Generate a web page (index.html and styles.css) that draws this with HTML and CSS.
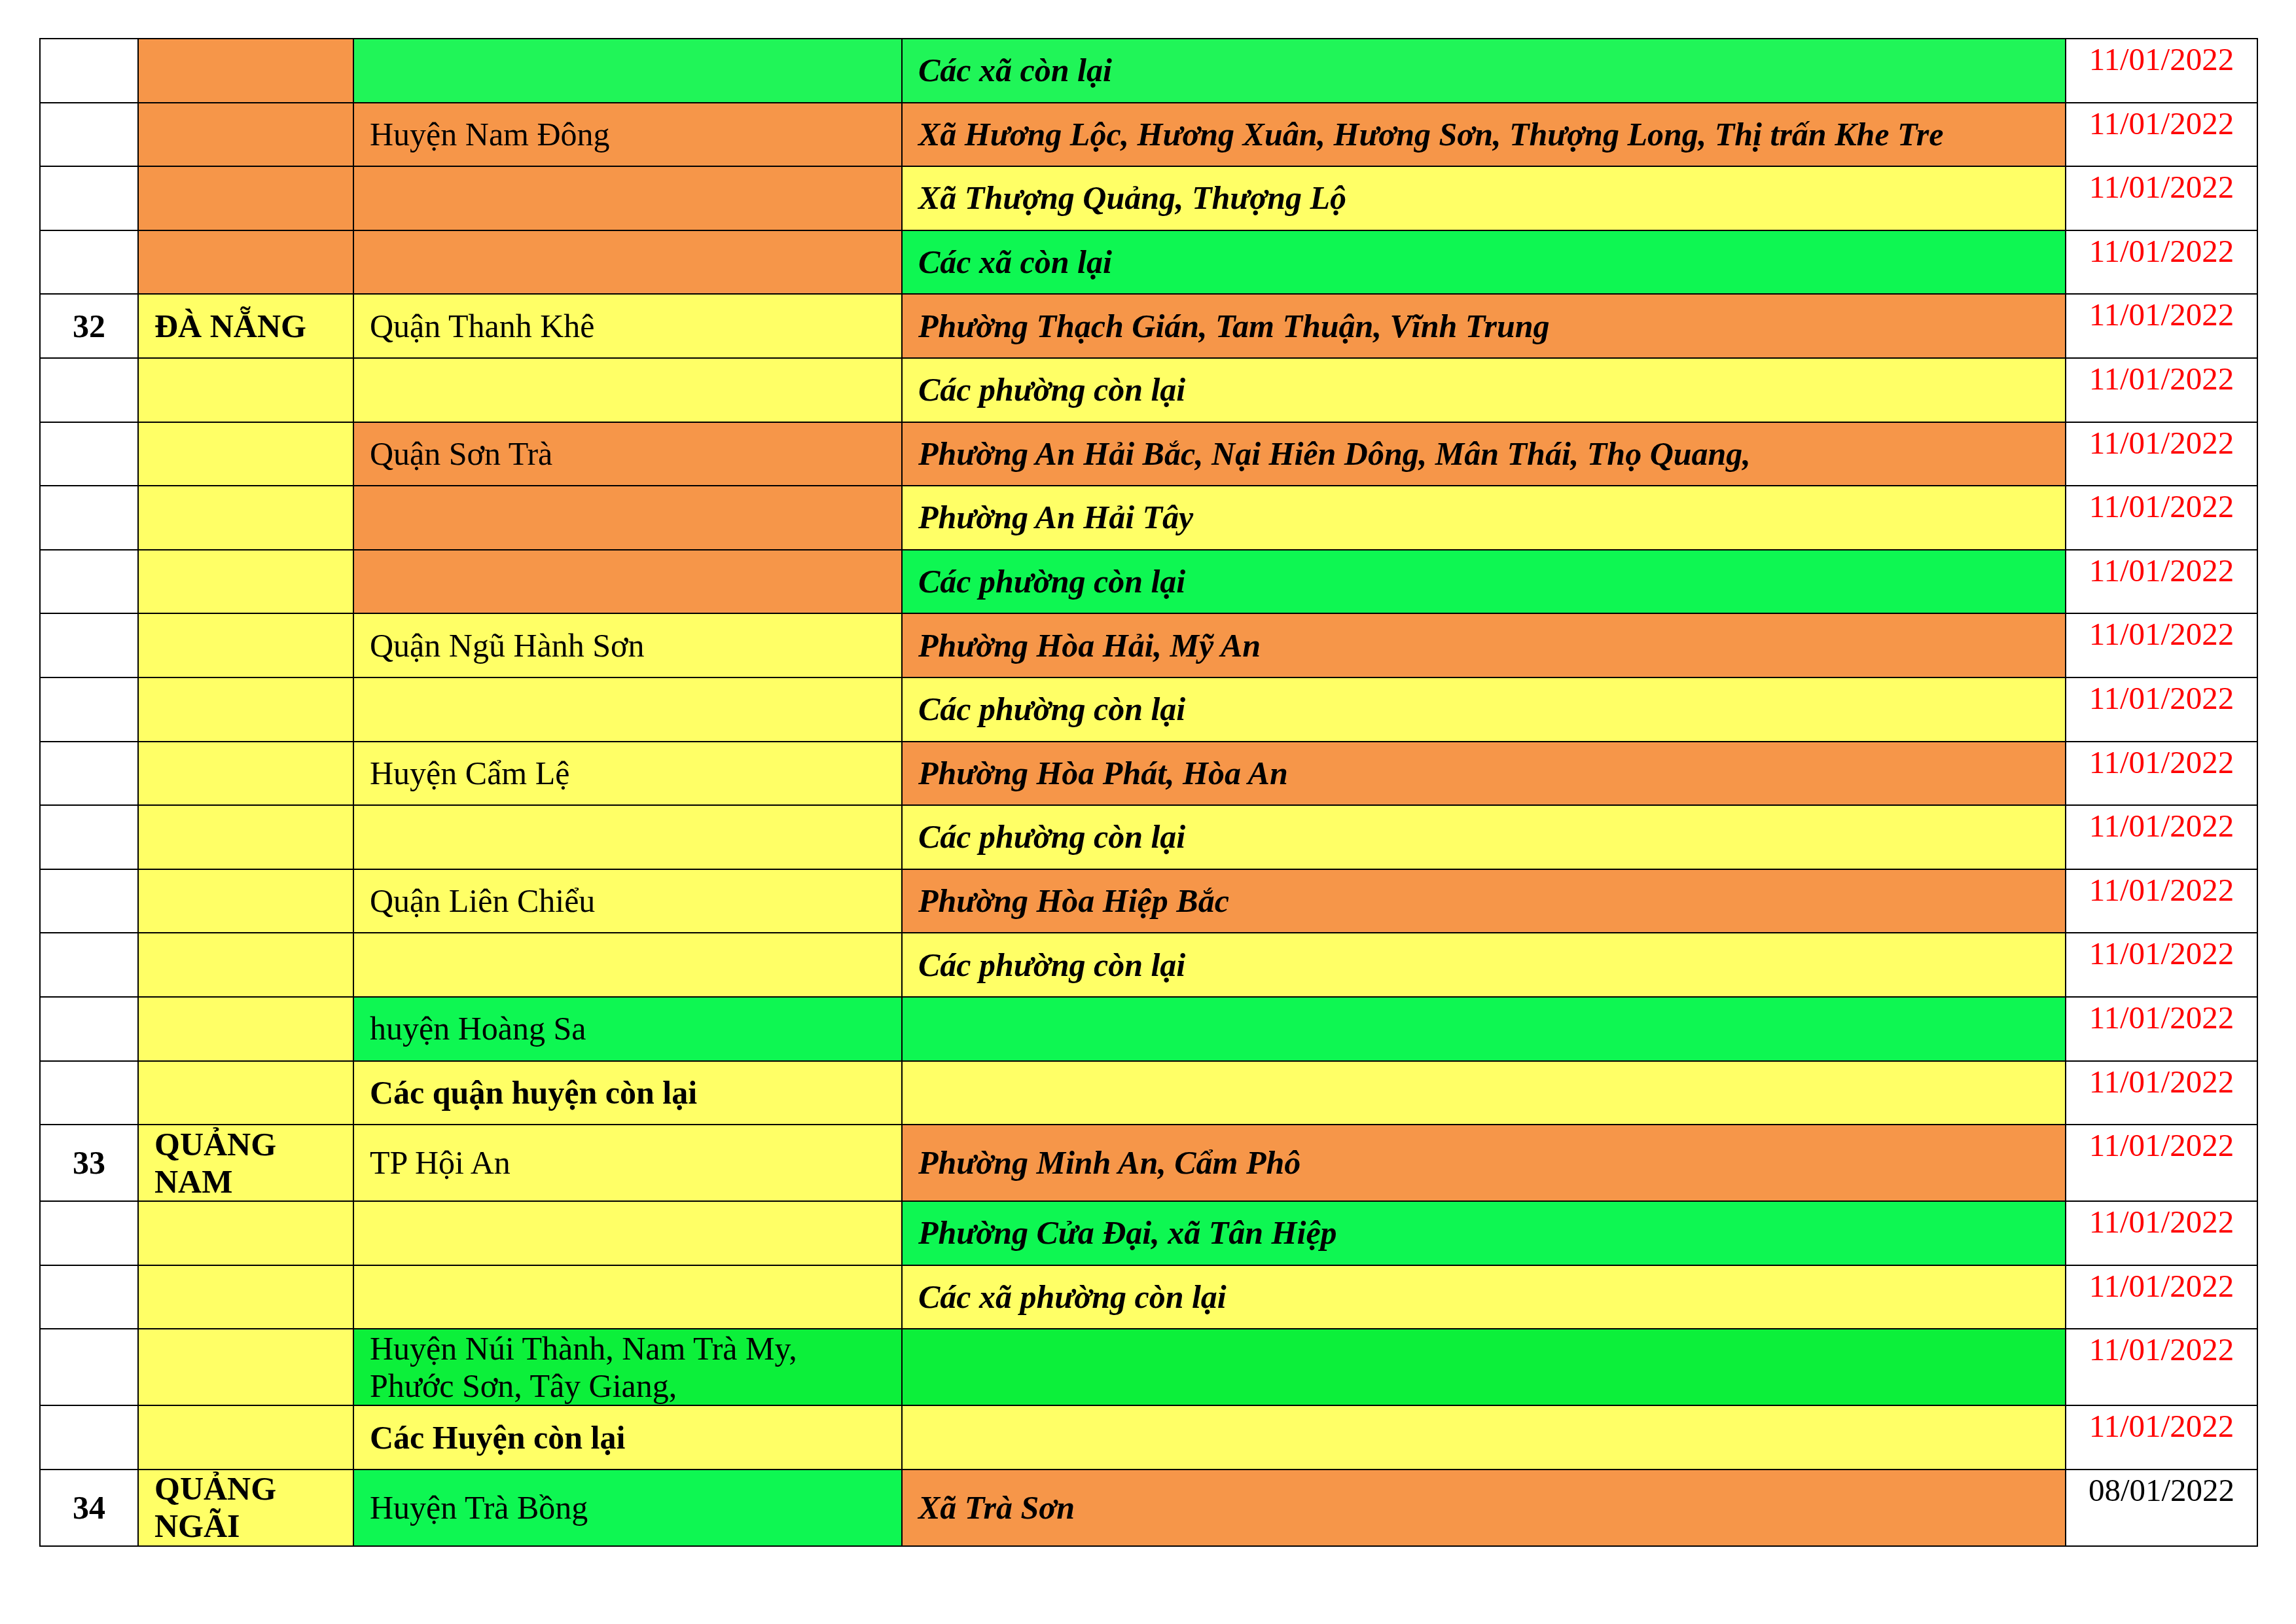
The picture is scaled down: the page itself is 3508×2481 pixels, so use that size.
FILE: index.html
```html
<!DOCTYPE html>
<html lang="vi">
<head>
<meta charset="utf-8">
<title>Bảng phân loại cấp độ dịch</title>
<link rel="stylesheet" href="styles.css">
</head>
<body>
<table class="sheet">
  <colgroup>
    <col class="c-stt">
    <col class="c-tinh">
    <col class="c-huyen">
    <col class="c-xa">
    <col class="c-ngay">
  </colgroup>
  <tbody>
    <tr>
      <td class="stt"></td><td class="org"></td><td class="grn1"></td>
      <td class="xa grn1">Các xã còn lại</td><td class="ngay">11/01/2022</td>
    </tr>
    <tr>
      <td class="stt"></td><td class="org"></td><td class="org">Huyện Nam Đông</td>
      <td class="xa org">Xã Hương Lộc, Hương Xuân, Hương Sơn, Thượng Long, Thị trấn Khe Tre</td><td class="ngay">11/01/2022</td>
    </tr>
    <tr>
      <td class="stt"></td><td class="org"></td><td class="org"></td>
      <td class="xa yel">Xã Thượng Quảng, Thượng Lộ</td><td class="ngay">11/01/2022</td>
    </tr>
    <tr>
      <td class="stt"></td><td class="org"></td><td class="org"></td>
      <td class="xa grn">Các xã còn lại</td><td class="ngay">11/01/2022</td>
    </tr>
    <tr>
      <td class="stt">32</td><td class="tinh yel">ĐÀ NẴNG</td><td class="yel">Quận Thanh Khê</td>
      <td class="xa org">Phường Thạch Gián, Tam Thuận, Vĩnh Trung</td><td class="ngay">11/01/2022</td>
    </tr>
    <tr>
      <td class="stt"></td><td class="yel"></td><td class="yel"></td>
      <td class="xa yel">Các phường còn lại</td><td class="ngay">11/01/2022</td>
    </tr>
    <tr>
      <td class="stt"></td><td class="yel"></td><td class="org">Quận Sơn Trà</td>
      <td class="xa org">Phường An Hải Bắc, Nại Hiên Dông, Mân Thái, Thọ Quang,</td><td class="ngay">11/01/2022</td>
    </tr>
    <tr>
      <td class="stt"></td><td class="yel"></td><td class="org"></td>
      <td class="xa yel">Phường An Hải Tây</td><td class="ngay">11/01/2022</td>
    </tr>
    <tr>
      <td class="stt"></td><td class="yel"></td><td class="org"></td>
      <td class="xa grn">Các phường còn lại</td><td class="ngay">11/01/2022</td>
    </tr>
    <tr>
      <td class="stt"></td><td class="yel"></td><td class="yel">Quận Ngũ Hành Sơn</td>
      <td class="xa org">Phường Hòa Hải, Mỹ An</td><td class="ngay">11/01/2022</td>
    </tr>
    <tr>
      <td class="stt"></td><td class="yel"></td><td class="yel"></td>
      <td class="xa yel">Các phường còn lại</td><td class="ngay">11/01/2022</td>
    </tr>
    <tr>
      <td class="stt"></td><td class="yel"></td><td class="yel">Huyện Cẩm Lệ</td>
      <td class="xa org">Phường Hòa Phát, Hòa An</td><td class="ngay">11/01/2022</td>
    </tr>
    <tr>
      <td class="stt"></td><td class="yel"></td><td class="yel"></td>
      <td class="xa yel">Các phường còn lại</td><td class="ngay">11/01/2022</td>
    </tr>
    <tr>
      <td class="stt"></td><td class="yel"></td><td class="yel">Quận Liên Chiểu</td>
      <td class="xa org">Phường Hòa Hiệp Bắc</td><td class="ngay">11/01/2022</td>
    </tr>
    <tr>
      <td class="stt"></td><td class="yel"></td><td class="yel"></td>
      <td class="xa yel">Các phường còn lại</td><td class="ngay">11/01/2022</td>
    </tr>
    <tr>
      <td class="stt"></td><td class="yel"></td><td class="grn">huyện Hoàng Sa</td>
      <td class="xa grn"></td><td class="ngay">11/01/2022</td>
    </tr>
    <tr>
      <td class="stt"></td><td class="yel"></td><td class="bold yel">Các quận huyện còn lại</td>
      <td class="xa yel"></td><td class="ngay">11/01/2022</td>
    </tr>
    <tr class="tall">
      <td class="stt">33</td><td class="tinh yel">QUẢNG<br>NAM</td><td class="yel">TP Hội An</td>
      <td class="xa org">Phường Minh An, Cẩm Phô</td><td class="ngay">11/01/2022</td>
    </tr>
    <tr>
      <td class="stt"></td><td class="yel"></td><td class="yel"></td>
      <td class="xa grn">Phường Cửa Đại, xã Tân Hiệp</td><td class="ngay">11/01/2022</td>
    </tr>
    <tr>
      <td class="stt"></td><td class="yel"></td><td class="yel"></td>
      <td class="xa yel">Các xã phường còn lại</td><td class="ngay">11/01/2022</td>
    </tr>
    <tr class="tall">
      <td class="stt"></td><td class="yel"></td><td class="grn3">Huyện Núi Thành, Nam Trà My,<br>Phước Sơn, Tây Giang,</td>
      <td class="xa grn3"></td><td class="ngay">11/01/2022</td>
    </tr>
    <tr>
      <td class="stt"></td><td class="yel"></td><td class="bold yel">Các Huyện còn lại</td>
      <td class="xa yel"></td><td class="ngay">11/01/2022</td>
    </tr>
    <tr class="tall">
      <td class="stt">34</td><td class="tinh yel">QUẢNG<br>NGÃI</td><td class="grn">Huyện Trà Bồng</td>
      <td class="xa org">Xã Trà Sơn</td><td class="ngay black">08/01/2022</td>
    </tr>
  </tbody>
</table>
</body>
</html>
```

FILE: styles.css
```css
html, body {
  margin: 0;
  padding: 0;
  background: #ffffff;
}

body {
  padding: 58px 0 0 60px;
  font-family: "Liberation Serif", "Times New Roman", serif;
  font-size: 50px;
  line-height: 57px;
  color: #000;
}

.sheet {
  border-collapse: collapse;
  table-layout: fixed;
  width: 3388px;
}

.c-stt { width: 150px; }
.c-tinh { width: 329px; }
.c-huyen { width: 838px; }
.c-xa { width: 1778px; }
.c-ngay { width: 293px; }

.sheet tr {
  height: 97.6px;
}

.sheet tr.tall {
  height: 117px;
}

.sheet td {
  border: 2px solid #000;
  padding: 0 10px 0 24px;
  vertical-align: middle;
  white-space: nowrap;
  overflow: hidden;
  background: #ffffff;
}

.sheet td.stt {
  text-align: center;
  font-weight: bold;
  padding: 0;
}

.sheet td.tinh {
  font-weight: bold;
}

.sheet td.bold {
  font-weight: bold;
}

.sheet td.xa {
  font-weight: bold;
  font-style: italic;
}

.sheet td.ngay {
  vertical-align: top;
  text-align: center;
  color: #ff0000;
  font-size: 49px;
  padding: 2px 0 0 0;
}

.sheet td.ngay.black {
  color: #000;
}

.org { background: #f69649 !important; }
.yel { background: #ffff66 !important; }
.grn1 { background: #20f558 !important; }
.grn { background: #0ef752 !important; }
.grn3 { background: #0cf03a !important; }
```
